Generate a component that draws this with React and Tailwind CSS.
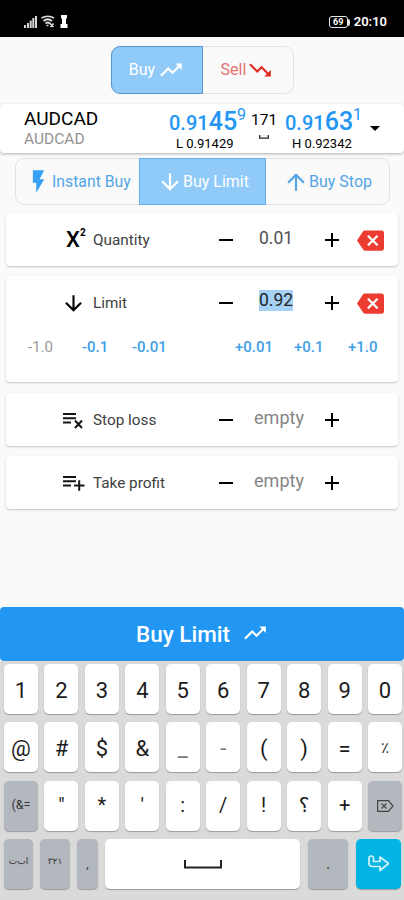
import clsx from "clsx";
import {
  MdAdd,
  MdArrowDownward,
  MdArrowDropDown,
  MdArrowUpward,
  MdBackspace,
  MdFlashOn,
  MdRemove,
  MdTrendingDown,
  MdTrendingUp,
} from "react-icons/md";

const KEY_ROWS = [
  ["1", "2", "3", "4", "5", "6", "7", "8", "9", "0"],
  ["@", "#", "$", "&", "_", "-", "(", ")", "=", "٪"],
];
const SYMBOLS = ['"', "*", "'", ":", "/", "!", "؟", "+"];

function StatusBar() {
  return (
    <div className="flex h-[37px] items-start justify-between bg-black pt-[15px] pr-[17px] pl-6 text-white">
      <div className="flex items-center gap-1">
        <svg width="13" height="13" viewBox="0 0 13 13" fill="#d5d5d5">
          <path d="M0 10h2v3H0zM3 8h2v5H3zM5.7 5.5h2V13h-2zM8.3 3h2v10h-2zM11 1h2v12h-2z" />
        </svg>
        <svg width="14" height="13" viewBox="0 0 14 13" fill="none" stroke="#dcdcdc" strokeWidth="1.7">
          <path d="M.5 3Q7-.500 13 3M2.500 6Q6.500 2.500 11 6M4.500 8.500Q6.500 6.500 9 8.500" />
          <path d="M5.500 10.500h2M8.500 8l4 4M12.500 8.500l-3 3.500" />
        </svg>
        <svg className="ml-px" width="8" height="13" viewBox="0 0 8 13" fill="#fff">
          <path d="M1 0h6v3.500H6V9h1.500v4h-7V9H2V3.500H1z" />
        </svg>
      </div>
      <div className="flex items-center gap-1">
        <div className="flex items-center">
          <span className="flex h-[12px] w-[19px] items-center justify-center rounded-[3px] border-[1.5px] border-gray-200 text-[9px] leading-none font-bold">
            69
          </span>
          <span className="h-[7px] w-[2px] rounded-r bg-gray-200" />
        </div>
        <span className="text-[13px] leading-[14px] font-semibold">20:10</span>
      </div>
    </div>
  );
}

function SideSwitch() {
  return (
    <div className="mx-auto mt-[9px] flex h-12 w-[183px] text-base">
      <button className="flex w-[92px] items-center justify-center gap-[3px] rounded-l-[9px] border border-[#5794cf] bg-[#90caf9] text-white">
        Buy
        <MdTrendingUp size={26} />
      </button>
      <button className="flex flex-1 items-center rounded-r-[9px] border border-l-0 border-[#e2e2e2] pl-[18px] text-[#e57373]">
        Sell
        <MdTrendingDown className="ml-px text-[#e02a20]" size={26} />
      </button>
    </div>
  );
}

function Price({ base, big, pip, extreme, className }) {
  return (
    <div className={className}>
      <div className="flex h-[29px] items-baseline font-medium text-[#2196f3]">
        <span className="text-[20px] leading-[27px]">{base}</span>
        <span className="text-[25px] leading-[27px]">{big}</span>
        <span className="self-start text-[16px] leading-[14px] font-normal">{pip}</span>
      </div>
      <div className="pl-[7px] text-[13px] leading-[14px] whitespace-nowrap text-black">{extreme}</div>
    </div>
  );
}

function Quote() {
  return (
    <div className="mt-2.5 flex h-[49px] rounded bg-white pl-6 shadow-[0_1px_3px_rgba(0,0,0,0.3)]">
      <div className="w-[145px] pt-[3px]">
        <div className="text-[19px] leading-6 text-black">AUDCAD</div>
        <div className="text-[15.500px] leading-4 text-[#929292]">AUDCAD</div>
      </div>
      <Price className="w-[82px] pt-1" base="0.91" big="45" pip="9" extreme="L 0.91429" />
      <div className="w-[34px] pt-[9px] text-[15.500px] leading-[14px] text-black">
        171
        <svg className="mt-2 ml-2" width="10" height="4" viewBox="0 0 10 4" fill="none" stroke="#222" strokeWidth="1.3">
          <path d="M.7 0v3.200h8.600V0" />
        </svg>
      </div>
      <Price className="w-[79px] pt-1" base="0.91" big="63" pip="1" extreme="H 0.92342" />
      <MdArrowDropDown className="mt-3 -ml-px text-black" size={24} />
    </div>
  );
}

function OrderTabs() {
  return (
    <div className="mt-[5px] mr-[14px] ml-[15px] flex h-[47px] text-[16px] text-[#54a5e6]">
      <button className="flex w-[124px] items-center rounded-l-[9px] border border-r-0 border-[#e2e2e2] pl-[9px]">
        <MdFlashOn className="text-[#35a0f4]" size={27} />
        <span className="whitespace-nowrap text-[15.800px]">Instant Buy</span>
      </button>
      <button className="flex w-[127px] items-center border border-[#6aaee8] bg-[#90caf9] pl-[17px] text-white">
        <MdArrowDownward size={26} />
        <span className="whitespace-nowrap">Buy Limit</span>
      </button>
      <button className="flex flex-1 items-center rounded-r-[9px] border border-l-0 border-[#e2e2e2] pl-[17px]">
        <MdArrowUpward size={26} />
        <span className="whitespace-nowrap">Buy Stop</span>
      </button>
    </div>
  );
}

function ListIcon({ type }) {
  return (
    <svg width="22" height="20" viewBox="0 0 22 20" fill="none" stroke="#161616" strokeWidth="2">
      <path d="M0 4h13M0 8.300h13M0 12.500h8" />
      {type === "add" ? <path d="M11 12.500h10.500M16.200 7.300v10.500" /> : <path d="M12 10.500l7 7.500M19 10.500l-7 7.500" />}
    </svg>
  );
}

function Field({ icon, label, value, state }) {
  return (
    <div className="flex h-[53px] items-center pt-px text-black">
      <div className="ml-[57px] flex w-[30px] shrink-0 justify-start">{icon}</div>
      <span className="w-[121px] text-[15.300px] text-[#404040]">{label}</span>
      <MdRemove className="shrink-0" size={24} />
      <div className={clsx("mb-[5px] w-[82px] text-center leading-5", state === "empty" ? "text-[18px]" : "pr-1.5 text-[17.500px]")}>
        <span
          className={clsx(
            state === "selected" && "inline-block h-[21px] bg-[#a5d1f7] text-[#222]",
            state === "empty" && "text-[#858585]",
            state === "filled" && "text-[#505050]"
          )}
        >
          {value}
        </span>
      </div>
      <MdAdd className="shrink-0" size={24} />
      {state !== "empty" && <MdBackspace className="ml-[13px] shrink-0 text-[#ec3b30]" size={27} />}
    </div>
  );
}

function Card({ className, children }) {
  return (
    <div className={clsx("mx-1.5 rounded bg-white shadow-[0_1px_2px_rgba(0,0,0,0.22)]", className)}>{children}</div>
  );
}

function Key({ dark, className, children }) {
  return (
    <button
      className={clsx(
        "flex h-[50px] items-center justify-center rounded-[5px] shadow-[0_1px_1px_#999]",
        dark ? "bg-[#b3b7be] text-[#333]" : "bg-white text-[#1c1c1c]",
        className
      )}
    >
      {children}
    </button>
  );
}

function Keyboard() {
  return (
    <div className="flex h-[239px] flex-col gap-2 bg-[#dadada] pt-[3px] pr-[2px] pl-1 font-['Roboto','DejaVu_Sans',sans-serif]">
      {KEY_ROWS.map((row) => (
        <div key={row[0]} className="grid grid-cols-10 gap-[6.500px]">
          {row.map((k) => (
            <Key key={k} className={clsx("pt-0.5", k === "٪" ? "text-[15px]" : "text-[22px]", (k === "-" || k === "_") && "text-[#777]!")}>
              {k}
            </Key>
          ))}
        </div>
      ))}
      <div className="grid grid-cols-10 gap-[6.500px] pt-px">
        <Key dark className="pb-0.5 text-[12.500px]">
          (&amp;=
        </Key>
        {SYMBOLS.map((k) => (
          <Key key={k} className="pb-0.5 text-[20px]">
            {k}
          </Key>
        ))}
        <Key dark>
          <svg width="17" height="12" viewBox="0 0 17 12" fill="none" stroke="#444" strokeWidth="1.2">
            <path d="M.6.600h10.800L16 6l-4.600 5.400H.6zM4.500 3.500l5 5M9.500 3.500l-5 5" />
          </svg>
        </Key>
      </div>
      <div className="flex">
        <Key dark className="w-[29px] pb-1 text-[9px]">
          ا‌ب‌ت
        </Key>
        <Key dark className="ml-[7px] w-[30px] pb-1 text-[9px]">
          ٣٢١
        </Key>
        <Key dark className="ml-[7px] w-[21px] text-[12px]">
          ,
        </Key>
        <Key className="ml-[7px] w-[195px]">
          <svg width="38" height="9" viewBox="0 0 38 9" fill="none" stroke="#222" strokeWidth="2">
            <path d="M1 0v7.500h36V0" />
          </svg>
        </Key>
        <Key dark className="ml-2 w-[40px] text-[16px]">
          .
        </Key>
        <Key className="ml-2 w-[45px] bg-[#04b4e4]! pb-0.5">
          <svg width="22" height="17" viewBox="0 0 22 17" fill="none" stroke="#d5f3fb" strokeWidth="1.700" strokeLinejoin="round">
            <path d="M1 3Q1 1 3.200 1T5.500 3V6.500H12V2l8.500 6.500L12 15.500V11.500H5Q1 11.500 1 8z" />
          </svg>
        </Key>
      </div>
    </div>
  );
}

export default function App() {
  return (
    <div className="flex h-[900px] w-[404px] flex-col overflow-hidden bg-[#fafafa] font-['Roboto',sans-serif]">
      <StatusBar />
      <SideSwitch />
      <Quote />
      <OrderTabs />

      <Card className="mt-2">
        <Field
          icon={
            <span className="ml-[3px] flex items-start text-[22px] leading-5 font-medium">
              X<sup className="-top-0.5 text-[10px] leading-[10px] font-bold">2</sup>
            </span>
          }
          label="Quantity"
          value="0.01"
          state="filled"
        />
      </Card>

      <Card className="mt-2.5 h-[106px]">
        <Field icon={<MdArrowDownward className="-ml-0.5" size={25} />} label="Limit" value="0.92" state="selected" />
        <div className="flex h-9 items-center pl-[22px] text-[15px] font-medium text-[#3f9fe6]">
          <span className="w-[54px] font-normal text-[#999]">-1.0</span>
          <span className="w-[50px]">-0.1</span>
          <span className="w-[103px]">-0.01</span>
          <span className="w-[59px]">+0.01</span>
          <span className="w-[54px]">+0.1</span>
          <span>+1.0</span>
        </div>
      </Card>

      <Card className="mt-[11px]">
        <Field icon={<ListIcon type="remove" />} label="Stop loss" value="empty" state="empty" />
      </Card>
      <Card className="mt-2.5">
        <Field icon={<ListIcon type="add" />} label="Take profit" value="empty" state="empty" />
      </Card>

      <button className="mt-auto flex h-[54px] shrink-0 items-center justify-center gap-3 rounded bg-[#2196f3] pt-0.5 text-[22.500px] font-medium text-white">
        Buy Limit
        <MdTrendingUp className="mb-1" size={26} />
      </button>
      <Keyboard />
    </div>
  );
}
